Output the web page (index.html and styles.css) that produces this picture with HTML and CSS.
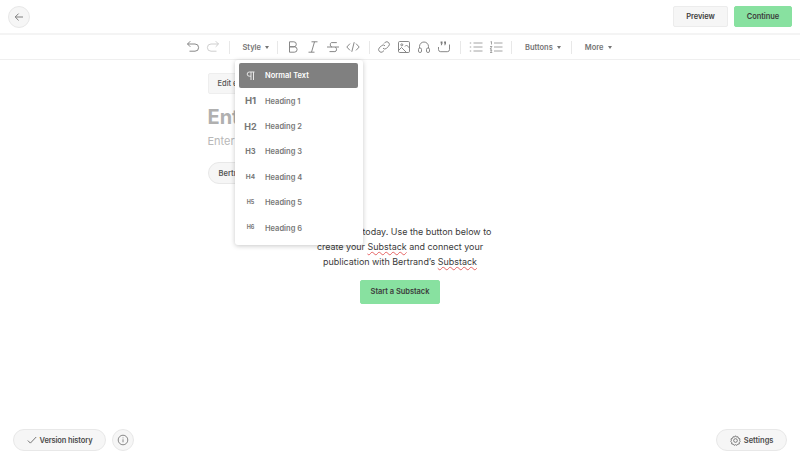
FILE: index.html
```html
<!DOCTYPE html>
<html lang="en">
<head>
<meta charset="utf-8">
<title>Editor</title>
<link rel="stylesheet" href="styles.css">
</head>
<body>
<div class="page">
  <header class="topbar">
    <button class="circle back" aria-label="Back">
      <svg width="10" height="10" viewBox="0 0 10 10"><path d="M9 5H1.200M4.600 1.600 1.200 5l3.400 3.400"/></svg>
    </button>
    <div class="top-actions">
      <button class="btn grey">Preview</button>
      <button class="btn green">Continue</button>
    </div>
  </header>

  <nav class="toolbar">
    <div class="group g-history">
      <svg class="ic" width="14" height="14" viewBox="0 0 14 14"><path d="M1.500 4h7.500a3.600 3.600 0 0 1 0 7.200H3.500M4.300 1.200 1.500 4l2.800 2.800"/></svg>
      <svg class="ic faint" width="14" height="14" viewBox="0 0 14 14"><path d="M12.500 4H5a3.600 3.600 0 0 0 0 7.200h5.500M9.700 1.200 12.500 4 9.700 6.800"/></svg>
    </div>
    <span class="sep"></span>
    <button class="menu-btn style-btn">Style<i class="caret"></i></button>
    <span class="sep"></span>
    <div class="group g-format">
      <svg class="ic" width="14" height="14" viewBox="0 0 14 14"><path d="M3.500 1.800h4.300a2.500 2.500 0 0 1 0 5H3.500zM3.500 6.800h4.900a2.700 2.700 0 0 1 0 5.400H3.500z"/></svg>
      <svg class="ic" width="14" height="14" viewBox="0 0 14 14"><path d="M5.500 1.800h6M2.500 12.200h6M8.500 1.800l-3 10.400"/></svg>
      <svg class="ic" width="14" height="14" viewBox="0 0 14 14"><path d="M1 7h12M10.800 2.600H5.500C3.800 2.600 3.800 7 6 7M3.500 11.600h5.400c2 0 2.200-3.200.5-4.600"/></svg>
      <svg class="ic" width="14" height="14" viewBox="0 0 14 14"><path d="M4 3.600.8 7 4 10.400M10 3.600 13.200 7 10 10.400M8.200 2.200 5.800 11.800"/></svg>
    </div>
    <span class="sep"></span>
    <div class="group g-media">
      <svg class="ic" width="14" height="14" viewBox="0 0 14 14"><path d="M6 8.200a2.500 2.500 0 0 0 3.600 0l2.200-2.200A2.600 2.600 0 0 0 8.200 2.300L7 3.500M8 5.800a2.500 2.500 0 0 0-3.600 0L2.200 8a2.600 2.600 0 0 0 3.600 3.700L7 10.500"/></svg>
      <svg class="ic" width="14" height="14" viewBox="0 0 14 14"><rect x="1.500" y="1.500" width="11" height="11" rx="1.200"/><circle cx="4.800" cy="4.800" r="1"/><path d="m1.500 10.500 3-3 5 5M8 6.500l1.500-1.500 3 3"/></svg>
      <svg class="ic" width="14" height="14" viewBox="0 0 14 14"><path d="M2.500 8V6.500a4.500 4.500 0 0 1 9 0V8"/><rect x="1.500" y="8" width="3" height="4.500" rx="1.400"/><rect x="9.500" y="8" width="3" height="4.500" rx="1.400"/></svg>
      <svg class="ic" width="14" height="14" viewBox="0 0 14 14"><path d="M1.500 7v2.500a2.200 2.200 0 0 0 2.200 2.200h6.600a2.200 2.200 0 0 0 2.200-2.200V4.500"/><path class="fill" d="M3.600 1.500h1.900v2l-.8 1.700h-.9l.5-1.600h-.7zM7.100 1.500H9v2l-.8 1.700h-.9l.5-1.600h-.7z"/></svg>
    </div>
    <span class="sep"></span>
    <div class="group">
      <svg class="ic light" width="14" height="14" viewBox="0 0 14 14"><path d="M4.500 3h9M4.500 7h9M4.500 11h9M.8 3h1.400M.8 7h1.400M.8 11h1.400"/></svg>
      <svg class="ic light" width="14" height="14" viewBox="0 0 14 14"><path d="M5 3h8.500M5 7h8.500M5 11h8.500M1.500 1.800l1-.3v3M1 6.500h2L1 9h2M1 10.200h2l-1 1 1 1.300H1"/></svg>
    </div>
    <span class="sep"></span>
    <button class="menu-btn buttons-btn">Buttons<i class="caret"></i></button>
    <span class="sep"></span>
    <button class="menu-btn more-btn">More<i class="caret"></i></button>
  </nav>

  <main class="content">
    <div class="editor">
      <button class="edit-btn">Edit email header</button>
      <h1 class="title">Enter title…</h1>
      <p class="subtitle">Enter subtitle…</p>
      <button class="author">Bertrand</button>
      <div class="notice">
        <p>Sign up free today. Use the button below to<br>create your <u>Substack</u> and connect your<br>publication with Bertrand’s <u>Substack</u></p>
        <button class="btn green start">Start a Substack</button>
      </div>
    </div>
    <ul class="dropdown">
      <li class="item active"><span class="mark">
        <svg class="pilcrow" width="10" height="10" viewBox="0 0 10 10"><path d="M8.500 1H3.300a2.100 2.100 0 0 0 0 4.200H5M5 1v8M7.500 1v8"/></svg>
      </span>Normal Text</li>
      <li class="item"><span class="mark h1">H1</span>Heading 1</li>
      <li class="item"><span class="mark h2">H2</span>Heading 2</li>
      <li class="item"><span class="mark h3">H3</span>Heading 3</li>
      <li class="item"><span class="mark h4">H4</span>Heading 4</li>
      <li class="item"><span class="mark h5">H5</span>Heading 5</li>
      <li class="item"><span class="mark h6">H6</span>Heading 6</li>
    </ul>
  </main>

  <footer class="bottombar">
    <div class="foot-left">
      <button class="pill">
        <svg class="ic dark" width="10" height="10" viewBox="0 0 10 10"><path d="m.8 5.500 2.600 2.600L9.200 2"/></svg>
        <span class="tight">Version history</span>
      </button>
      <button class="circle" aria-label="Info">
        <svg class="ic" width="12" height="12" viewBox="0 0 12 12"><circle cx="6" cy="6" r="4.800"/><path d="M6 5.300v3M6 3.500v.8"/></svg>
      </button>
    </div>
    <button class="pill">
      <svg class="ic dark" width="11" height="11" viewBox="0 0 12 12"><path d="M6 .8 7 2.200l1.700-.3.500 1.700 1.700.6-.4 1.800L11.300 7l-1.300 1.100.2 1.700-1.700.2L7.500 11.300 6 10.500l-1.500.8L3.500 10l-1.700-.2.2-1.700L.7 7l.8-1-.4-1.800 1.700-.6.500-1.700L5 2.200z"/><circle cx="6" cy="6" r="2"/></svg>
      Settings
    </button>
  </footer>
</div>
</body>
</html>
```

FILE: styles.css
```css
* { box-sizing: border-box; }
html, body { margin: 0; height: 100%; background: #fff; }
body { font-family: Inter, "Liberation Sans", sans-serif; color: #333; overflow: hidden; }
button { font-family: inherit; cursor: pointer; margin: 0; }
ul { list-style: none; margin: 0; padding: 0; }

.page { height: 459px; display: flex; flex-direction: column; }

.topbar {
  height: 35px;
  flex: none;
  padding: 6px 8px 0 6px;
  display: flex;
  justify-content: space-between;
  align-items: flex-start;
  border-bottom: 2px solid #f4f4f4;
}
.circle {
  width: 22px;
  height: 22px;
  padding: 0;
  border-radius: 50%;
  border: 1px solid #e8e8e8;
  background: #f6f6f6;
  display: flex;
  align-items: center;
  justify-content: center;
}
.back svg { fill: none; stroke: #808080; stroke-width: 1; }
.back { margin-left: 2px; }
.top-actions { display: flex; gap: 6px; }
.btn {
  height: 21px;
  padding: 0;
  border-radius: 2px;
  font-size: 7.500px;
  font-weight: 600;
  letter-spacing: -.05px;
  color: #3c3c3c;
  border: 1px solid transparent;
}
.grey { width: 55px; background: #f6f6f6; border-color: #ececec; }
.green { width: 58px; background: #88e1a0; border-color: #88e1a0; }

.toolbar {
  height: 25px;
  flex: none;
  display: flex;
  align-items: center;
  justify-content: center;
  padding-right: 2px;
  border-bottom: 1px solid #efefef;
}
.group { display: flex; align-items: center; gap: 6px; }
.g-history, .g-format, .g-media { margin-right: 1px; }
.g-media { margin-left: -1px; }
.ic { fill: none; stroke: #7a7a7a; stroke-width: .9; flex: none; }
.ic .fill { fill: #7a7a7a; stroke: none; }
.ic.faint { stroke: #c8c8c8; }
.ic.light { stroke: #9a9a9a; }
.ic.dark { stroke: #666; }
.sep { width: 1px; height: 13px; background: #e8e8e8; margin: 0 8px; flex: none; }
.menu-btn {
  border: 0;
  background: none;
  padding: 0;
  display: flex;
  align-items: center;
  gap: 4px;
  font-size: 7.500px;
  font-weight: 600;
  color: #757575;
}
.style-btn { margin: 0 0 0 4px; }
.buttons-btn { margin: 0 2px 0 5px; }
.more-btn { margin: 0 0 0 5px; }
.caret {
  width: 0;
  height: 0;
  border-left: 2.500px solid transparent;
  border-right: 2.500px solid transparent;
  border-top: 3px solid #757575;
}

.content { flex: 1; position: relative; display: flex; justify-content: center; min-height: 0; }
.editor { width: 385px; padding-top: 13px; }
.edit-btn {
  height: 21px;
  width: 96px;
  display: block;
  padding: 0 0 0 9px;
  text-align: left;
  border: 1px solid #eee;
  border-radius: 2px;
  background: #f6f6f6;
  font-size: 7.500px;
  font-weight: 500;
  color: #555;
  white-space: nowrap;
  overflow: hidden;
}
.title { margin: 11px 0 0; font-size: 20px; line-height: 24px; font-weight: 700; color: #b0b0b0; }
.subtitle { margin: 4px 0 0; font-size: 11px; line-height: 16px; color: #b8b8b8; }
.author {
  display: block;
  margin-top: 13px;
  height: 22px;
  width: 70px;
  padding: 0 0 0 10px;
  text-align: left;
  border: 1px solid #e8e8e8;
  border-radius: 11px;
  background: #f6f6f6;
  font-size: 7.500px;
  font-weight: 600;
  color: #555;
}
.notice { margin-top: 40px; text-align: center; }
.notice p { margin: 0; font-size: 8.950px; line-height: 15.200px; color: #3a3a3a; }
.notice u { text-decoration: underline wavy rgba(224, 64, 64, .8) .6px; text-underline-offset: 1px; }
.start { display: block; margin: 10px auto 0; width: 80px; height: 24px; }

.dropdown {
  position: absolute;
  left: 235px;
  top: 0;
  width: 128px;
  height: 185px;
  padding: 3px 5px 3px 4px;
  background: #fff;
  border-radius: 3px;
  box-shadow: 0 1px 5px rgba(0, 0, 0, .22);
  z-index: 2;
}
.item {
  height: 25.400px;
  display: flex;
  align-items: center;
  font-size: 7.500px;
  font-weight: 600;
  color: #777;
  border-radius: 2px;
}
.item.active { background: #808080; color: #fff; }
.mark { width: 26px; flex: none; text-align: center; font-weight: 700; line-height: 1; display: flex; justify-content: center; padding-right: 3px; }
.pilcrow { fill: none; stroke: #e8e8e8; stroke-width: 1; }
.h1 { font-size: 9.500px; }
.h2 { font-size: 9px; }
.h3 { font-size: 7.500px; }
.h4 { font-size: 6.500px; }
.h5, .h6 { font-size: 5.500px; }

.bottombar {
  flex: none;
  height: 47px;
  padding: 17px 13px 8px 13px;
  display: flex;
  justify-content: space-between;
  align-items: center;
}
.foot-left { display: flex; align-items: center; gap: 6px; }
.pill {
  height: 22px;
  padding: 0 12.500px;
  display: flex;
  align-items: center;
  gap: 3px;
  border: 1px solid #e8e8e8;
  border-radius: 11px;
  background: #f6f6f6;
  font-size: 7.500px;
  font-weight: 600;
  color: #4a4a4a;
}
.tight { letter-spacing: -.13px; }
```
